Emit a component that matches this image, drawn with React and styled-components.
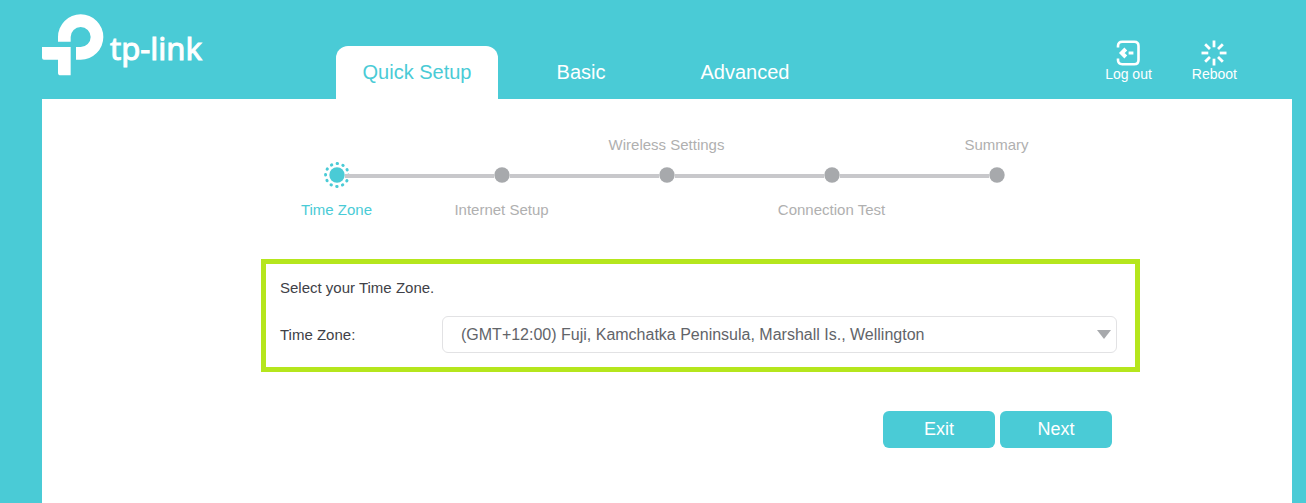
import React, { useState } from "react";
import styled, { createGlobalStyle } from "styled-components";

const steps = [
  { name: "Time Zone", side: "bottom" },
  { name: "Internet Setup", side: "bottom" },
  { name: "Wireless Settings", side: "top" },
  { name: "Connection Test", side: "bottom" },
  { name: "Summary", side: "top" },
];

const tabs = ["Quick Setup", "Basic", "Advanced"];

const rays = [0, 45, 90, 135, 180, 225, 270, 315];

const LogoMark = () => (
  <svg width="62" height="62" viewBox="36 40 186 186" fill="#fff" aria-hidden="true">
    <path d="M84 123V109A68 68 0 1 1 152 177H138V139H152A30 30 0 1 0 122 109V123Z" />
    <path d="M36 139H122V224H92Q84 224 84 216V177H42Q36 177 36 171Z" />
  </svg>
);

const LogoutIcon = () => (
  <svg width="26" height="26" viewBox="0 0 26 26" fill="none" stroke="#fff" aria-hidden="true">
    <path strokeWidth="2.6" d="M3 7.5V6Q3 1.8 7.2 1.8H19.3Q23.5 1.8 23.5 6V20Q23.5 24.2 19.3 24.2H7.2Q3 24.2 3 20V18.5" />
    <path strokeWidth="4" d="M10.8 9L6.8 13L10.8 17" />
    <path strokeWidth="3" d="M13.6 13H18.4" />
  </svg>
);

const RebootIcon = () => (
  <svg width="26" height="26" viewBox="0 0 26 26" stroke="#fff" strokeWidth="2.8" aria-hidden="true">
    {rays.map(deg => (
      <path key={deg} d="M13 0.5V7.3" transform={`rotate(${deg} 13 13)`} />
    ))}
  </svg>
);

const StepDot = ({ active }) => (
  <Dot viewBox="0 0 16 16" aria-hidden="true">
    <circle cx="8" cy="8" r="7.7" fill={active ? "#4acbd6" : "#a7a9ac"} />
    {active && (
      <circle
        cx="8"
        cy="8"
        r="11.4"
        fill="none"
        stroke="#4acbd6"
        strokeWidth="3"
        strokeLinecap="round"
        strokeDasharray="0.4 5.569"
        strokeDashoffset="0.2"
      />
    )}
  </Dot>
);

const App = () => {
  const [tab, setTab] = useState("Quick Setup");
  return (
    <Page>
      <GlobalStyle />
      <Header>
        <Logo href="#">
          <LogoMark />
          <Wordmark>tp-link</Wordmark>
        </Logo>
        <Tabs>
          {tabs.map(name => (
            <Tab key={name} $active={name === tab} onClick={() => setTab(name)}>
              {name}
            </Tab>
          ))}
        </Tabs>
        <Actions>
          <Action>
            <LogoutIcon />
            Log out
          </Action>
          <Action>
            <RebootIcon />
            Reboot
          </Action>
        </Actions>
      </Header>
      <Panel>
        <Steps>
          {steps.map((step, i) => (
            <Step key={step.name} $active={i === 0}>
              <StepName $side={step.side}>{step.name}</StepName>
              <Track>
                <Line $hidden={i === 0} />
                <StepDot active={i === 0} />
                <Line $hidden={i === steps.length - 1} />
              </Track>
            </Step>
          ))}
        </Steps>
        <Form onSubmit={e => e.preventDefault()}>
          <Box>
            <Hint>Select your Time Zone.</Hint>
            <Row>
              <Label htmlFor="timezone">Time Zone:</Label>
              <SelectWrap>
                <Select id="timezone">
                  <option>(GMT+12:00) Fuji, Kamchatka Peninsula, Marshall Is., Wellington</option>
                </Select>
                <Arrow viewBox="0 0 14 9" aria-hidden="true">
                  <path d="M0 0H14L7 9Z" fill="#a7a9ac" />
                </Arrow>
              </SelectWrap>
            </Row>
          </Box>
          <Buttons>
            <Button type="button">Exit</Button>
            <Button type="submit">Next</Button>
          </Buttons>
        </Form>
      </Panel>
    </Page>
  );
};

const GlobalStyle = createGlobalStyle`
  * {
    box-sizing: border-box;
  }
  body {
    margin: 0;
    background: #4acbd6;
    font-family: "Liberation Sans", Arial, sans-serif;
  }
  button, select {
    font-family: inherit;
  }
`;

const Page = styled.div`
  display: flex;
  flex-direction: column;
  min-height: 100vh;
  padding: 0 14px 0 42px;
`;

const Header = styled.header`
  display: flex;
  align-items: flex-end;
  height: 99px;
`;

const Logo = styled.a`
  display: flex;
  align-items: center;
  gap: 6px;
  flex: 0 0 294px;
  padding-bottom: 23px;
  color: #fff;
  text-decoration: none;
`;

const Wordmark = styled.span`
  font-family: "Noto Sans", sans-serif;
  font-size: 31px;
  line-height: 40px;
  padding-top: 6px;
  -webkit-text-stroke: 1px #fff;
`;

const Tabs = styled.nav`
  display: flex;
  gap: 2px;
`;

const Tab = styled.button`
  width: 162px;
  height: 53px;
  padding: 0;
  border: 0;
  border-radius: 12px 12px 0 0;
  background: ${props => (props.$active ? "#fff" : "transparent")};
  color: ${props => (props.$active ? "#4acbd6" : "#fff")};
  font-size: 20px;
  cursor: pointer;
`;

const Actions = styled.div`
  display: flex;
  gap: 40px;
  margin-left: auto;
  padding: 0 55px 17px 0;
`;

const Action = styled.button`
  display: flex;
  flex-direction: column;
  align-items: center;
  padding: 0;
  border: 0;
  background: none;
  color: #fff;
  font-size: 14px;
  line-height: 16px;
  cursor: pointer;
`;

const Panel = styled.main`
  flex: 1;
  padding: 37px 152px 48px 219px;
  background: #fff;
`;

const Steps = styled.ol`
  display: grid;
  grid-template-columns: repeat(5, 165px);
  margin: 0 0 40px -7px;
  padding: 0;
  list-style: none;
`;

const Step = styled.li`
  display: grid;
  grid-template-rows: 18px 16px 18px;
  row-gap: 13px;
  padding-bottom: 5px;
  color: ${props => (props.$active ? "#4acbd6" : "#b0b0b0")};
  font-size: 15px;
  line-height: 18px;
  text-align: center;
`;

const StepName = styled.span`
  grid-row: ${props => (props.$side === "top" ? 1 : 3)};
  padding-top: ${props => (props.$side === "top" ? 0 : "5px")};
`;

const Track = styled.div`
  grid-row: 2;
  display: flex;
  align-items: center;
`;

const Line = styled.div`
  flex: 1;
  height: 4px;
  margin-top: 2px;
  background: ${props => (props.$hidden ? "transparent" : "#c8c8cb")};
`;

const Dot = styled.svg`
  width: 16px;
  height: 16px;
  overflow: visible;
`;

const Form = styled.form`
  display: flex;
  flex-direction: column;
  gap: 39px;
`;

const Box = styled.div`
  display: flex;
  flex-direction: column;
  gap: 19px;
  padding: 15px 18px 14px 14px;
  border: 5px solid #b5e61d;
  color: #404147;
  font-size: 15px;
  line-height: 18px;
`;

const Hint = styled.p`
  margin: 0;
`;

const Row = styled.div`
  display: flex;
  align-items: center;
`;

const Label = styled.label`
  flex: 0 0 162px;
`;

const SelectWrap = styled.div`
  position: relative;
  flex: 1;
  display: flex;
`;

const Select = styled.select`
  flex: 1;
  min-width: 0;
  height: 37px;
  padding: 0 36px 0 18px;
  border: 1px solid #e2e2e4;
  border-radius: 6px;
  background: #fff;
  color: #626469;
  font-size: 16px;
  appearance: none;
`;

const Arrow = styled.svg`
  position: absolute;
  top: 14px;
  right: 6px;
  width: 14px;
  height: 9px;
  pointer-events: none;
`;

const Buttons = styled.div`
  display: flex;
  justify-content: flex-end;
  gap: 5px;
  padding-right: 28px;
`;

const Button = styled.button`
  width: 112px;
  height: 37px;
  padding: 0;
  border: 0;
  border-radius: 6px;
  background: #4acbd6;
  color: #fff;
  font-size: 18px;
  cursor: pointer;
`;

export default App;
